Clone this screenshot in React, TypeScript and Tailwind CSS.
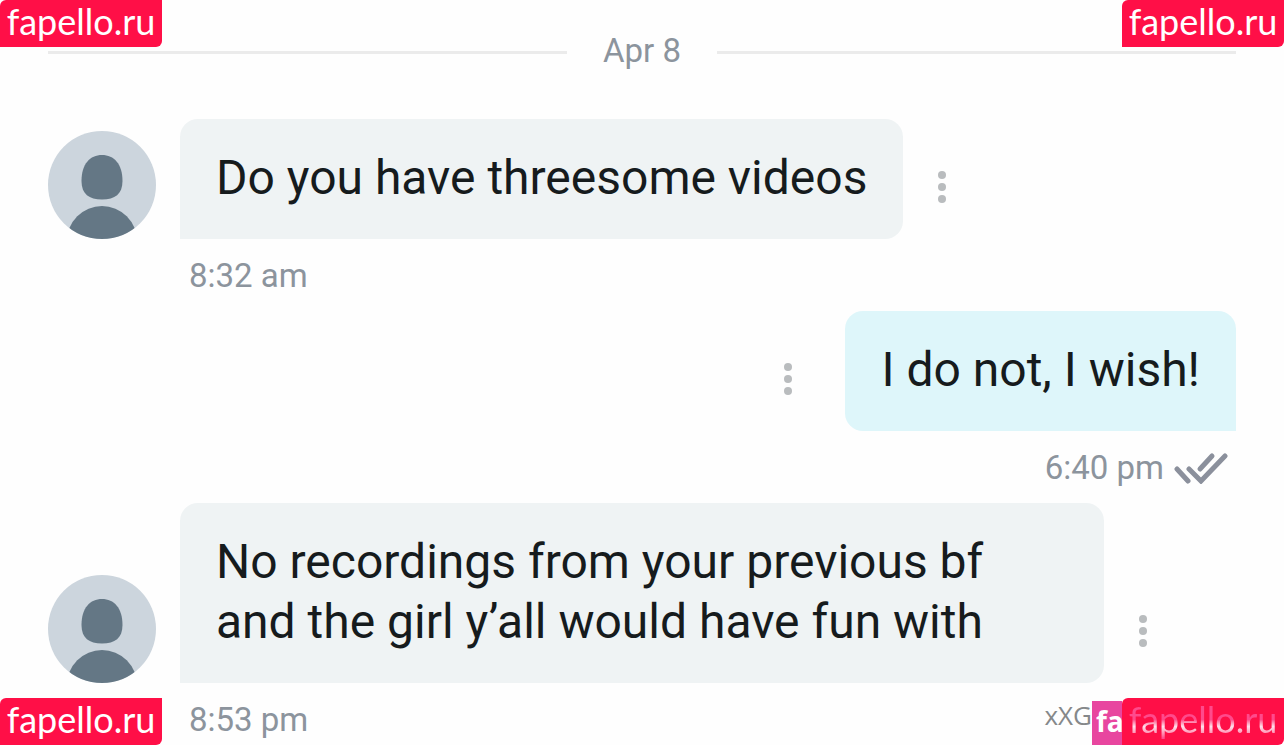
import type { ReactNode } from "react";

interface MessageProps {
  text: string;
  time: string;
}

function Avatar() {
  return (
    <svg
      viewBox="0 0 108 108"
      className="size-27 shrink-0 overflow-hidden rounded-full bg-[#ccd5dd]"
      fill="#647785"
      role="img"
      aria-label="User avatar"
    >
      <path d="M54 24C66 24 74.500 33 74.500 50C74.500 63 67 68.500 54 68.500C41 68.500 33.500 63 33.500 50C33.500 33 42 24 54 24Z" />
      <circle cx="54" cy="110" r="35" />
    </svg>
  );
}

function MoreButton() {
  return (
    <button type="button" aria-label="Message options" className="shrink-0 pb-9">
      <svg viewBox="0 0 8 32" className="h-8 w-2" fill="#b9bcbe">
        <circle cx="4" cy="4" r="4" />
        <circle cx="4" cy="16" r="4" />
        <circle cx="4" cy="28" r="4" />
      </svg>
    </button>
  );
}

function ReadMark() {
  return (
    <svg
      viewBox="0 0 54 32"
      className="h-8 w-[54px]"
      fill="none"
      stroke="#8b909c"
      strokeWidth="5"
      strokeLinecap="round"
      role="img"
      aria-label="Read"
    >
      <path d="M3 17L14 29" />
      <path d="M15 17L27 29L51 4" />
      <path d="M26 17L38 4" />
    </svg>
  );
}

function Received({ text, time }: MessageProps) {
  return (
    <div>
      <div className="flex items-end gap-6">
        <Avatar />
        <div className="flex items-end gap-[35px]">
          <p className="max-w-[924px] rounded-[18px] rounded-bl-none bg-[#eff3f4] px-9 pt-[29px] pb-[31px] text-5xl leading-[60px]">
            {text}
          </p>
          <MoreButton />
        </div>
      </div>
      <time className="block pt-[17px] pl-[141px] text-[33px] leading-10 text-[#8c949d]">{time}</time>
    </div>
  );
}

function Sent({ text, time }: MessageProps) {
  return (
    <div>
      <div className="flex items-end justify-end gap-[53px]">
        <MoreButton />
        <p className="rounded-[18px] rounded-br-none bg-[#def6fa] px-9 pt-[29px] pb-[31px] text-5xl leading-[60px]">
          {text}
        </p>
      </div>
      <div className="flex items-center justify-end gap-2.5 pt-[17px] pr-2 text-[33px] leading-10 text-[#8c949d]">
        <time>{time}</time>
        <ReadMark />
      </div>
    </div>
  );
}

function Badge({ children }: { children: ReactNode }) {
  return (
    <div className="flex h-[47px] w-[162px] justify-center rounded-tl-md rounded-br-md bg-[#ff0f47] pt-px font-['Lato',sans-serif] text-4xl leading-10 text-white">
      {children}
    </div>
  );
}

export default function App() {
  return (
    <main className="relative min-h-screen overflow-hidden bg-[#fefefe] px-12 pb-[5px] font-['Roboto',sans-serif] text-[#161b1d]">
      <div className="flex h-[119px] items-start gap-9 pt-[31px]">
        <div className="mt-5 h-[3px] flex-1 bg-[#ebebeb]" />
        <span className="text-[33px] leading-10 text-[#8c949d]">Apr 8</span>
        <div className="mt-5 h-[3px] flex-1 bg-[#ebebeb]" />
      </div>

      <div className="flex flex-col gap-[15px]">
        <Received text="Do you have threesome videos" time="8:32 am" />
        <Sent text="I do not, I wish!" time="6:40 pm" />
        <Received text="No recordings from your previous bf and the girl y’all would have fun with" time="8:53 pm" />
      </div>

      <div className="absolute top-0 left-0">
        <Badge>fapello.ru</Badge>
      </div>
      <div className="absolute top-0 right-0">
        <Badge>fapello.ru</Badge>
      </div>
      <div className="absolute bottom-0 left-0">
        <Badge>fapello.ru</Badge>
      </div>
      <div className="absolute right-0 bottom-0 flex items-end">
        <span className="pb-3 font-['Open_Sans',sans-serif] text-[26px] leading-9 text-[#85888a]">xXG</span>
        <div className="flex h-11 bg-[#e8469f] pl-1">
          <span className="w-[26px] font-['Open_Sans',sans-serif] text-[28px] leading-10 font-bold text-white">fa</span>
        </div>
        <Badge>
          <span className="bg-linear-to-b from-[#ff4a8c] from-45% via-[#ffe0ec] via-60% to-[#ff4a8c] to-85% bg-clip-text text-transparent">
            fapello.ru
          </span>
        </Badge>
      </div>
    </main>
  );
}
